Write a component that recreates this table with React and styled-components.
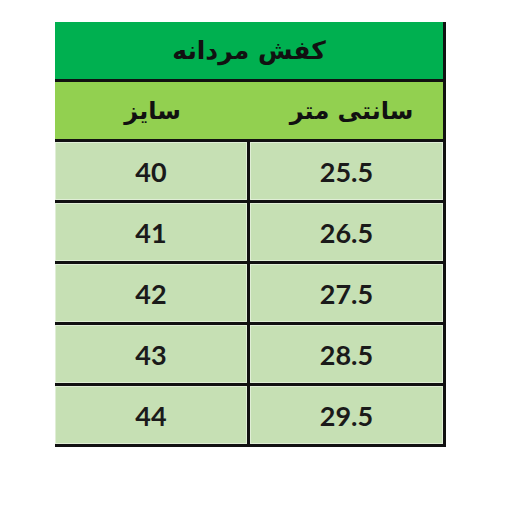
import React from 'react'
import styled, { createGlobalStyle } from 'styled-components'

const GlobalStyle = createGlobalStyle`
  html, body {
    margin: 0;
    padding: 0;
    background: #fff;
  }
`

const rows = [
  { size: '40', cm: '25.5' },
  { size: '41', cm: '26.5' },
  { size: '42', cm: '27.5' },
  { size: '43', cm: '28.5' },
  { size: '44', cm: '29.5' },
]

const App = () => {
  return (
    <Page>
      <GlobalStyle />
      <Table>
        <TitleRow dir="rtl">کفش مردانه</TitleRow>
        <HeaderRow>
          <HeadCell dir="rtl">سایز</HeadCell>
          <HeadCell dir="rtl" $shift>سانتی متر</HeadCell>
        </HeaderRow>
        {rows.map((r) => (
          <DataRow key={r.size}>
            <Cell $divider>{r.size}</Cell>
            <Cell>{r.cm}</Cell>
          </DataRow>
        ))}
      </Table>
    </Page>
  )
}

const Page = styled.div`
  width: 512px;
  height: 512px;
  box-sizing: border-box;
  padding: 22px 0 0 55px;
`

const Table = styled.div`
  width: 391px;
  border-right: 3px solid #111;
  box-sizing: border-box;
`

const TitleRow = styled.div`
  height: 57px;
  background: #00b050;
  border-bottom: 3px solid #111;
  display: flex;
  align-items: center;
  justify-content: center;
  font-family: "DejaVu Sans", sans-serif;
  font-weight: bold;
  font-size: 25px;
  color: #111;
`

const HeaderRow = styled.div`
  height: 57px;
  background: #92d050;
  border-bottom: 3px solid #111;
  display: grid;
  grid-template-columns: 195px 1fr;
`

const HeadCell = styled.div`
  display: flex;
  align-items: center;
  justify-content: center;
  padding-left: ${(p) => (p.$shift ? '10px' : '0')};
  font-family: "DejaVu Sans", sans-serif;
  font-weight: bold;
  font-size: 24px;
  color: #111;
`

const DataRow = styled.div`
  height: 58px;
  border-bottom: 3px solid #111;
  display: grid;
  grid-template-columns: 195px 1fr;
  background: #c6e0b4;
`

const Cell = styled.div`
  display: flex;
  align-items: center;
  justify-content: center;
  border-right: ${(p) => (p.$divider ? '3px solid #111' : 'none')};
  box-shadow: inset 0 0 0 1px rgba(255, 255, 255, 0.45);
  font-family: Lato, "Liberation Sans", sans-serif;
  font-weight: bold;
  font-size: 27px;
  color: #1a1a1a;
`

export default App
